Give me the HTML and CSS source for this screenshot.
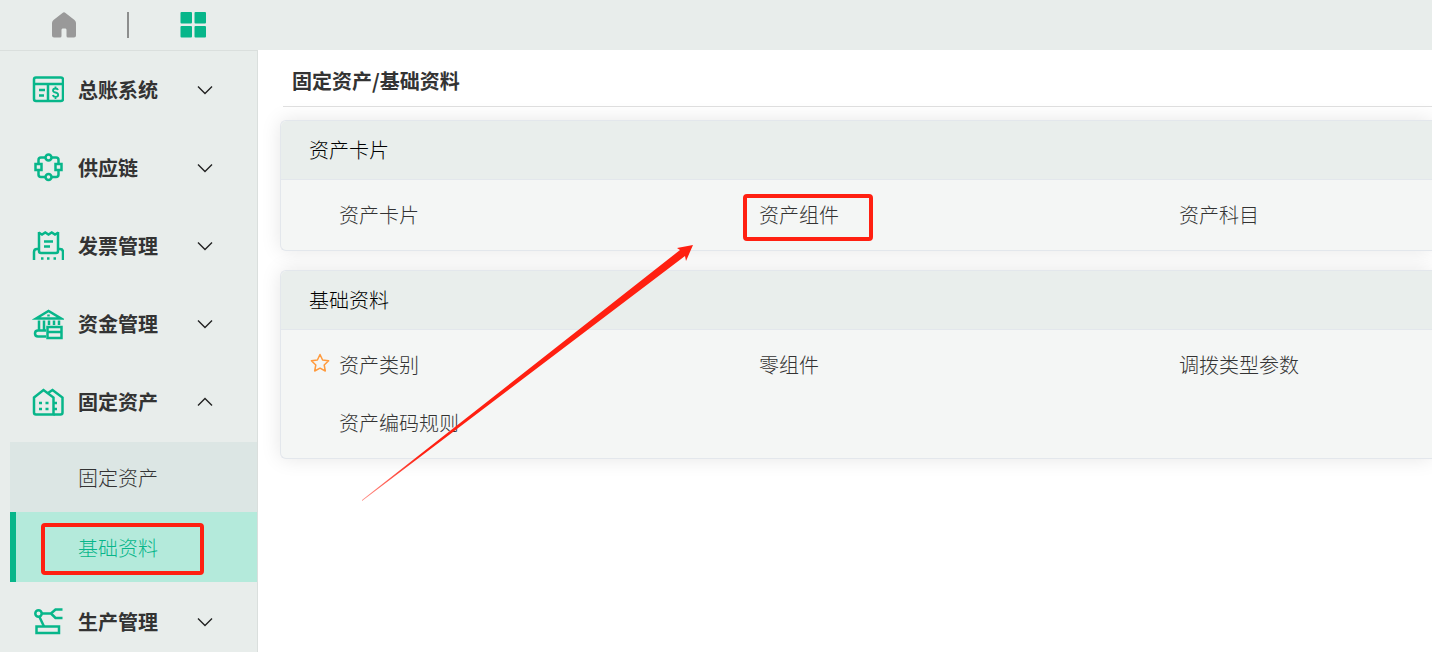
FILE: index.html
```html
<!DOCTYPE html>
<html lang="zh-CN">

<head>
    <meta charset="UTF-8">
    <meta name="viewport" content="width=device-width, initial-scale=1.0">
    <title>固定资产/基础资料</title>
    <link rel="stylesheet" href="styles.css">
</head>

<body>
    <header class="topbar">
        <a href="#" class="top-link" aria-label="首页">
            <svg width="24" height="26" viewBox="0 0 24 26">
                <path d="M10.500 1 Q12 -0.500 13.500 1 L22.500 8 Q24 9.500 24 11 V23.500 Q24 25.500 22 25.500 H16 Q14.500 25.500 14.500 24 V18 Q14.500 16.500 13.500 16.500 H10.500 Q9.500 16.500 9.500 18 V24 Q9.500 25.500 8 25.500 H2 Q0 25.500 0 23.500 V11 Q0 9.500 1.500 8 Z" fill="#999" />
            </svg>
        </a>
        <span class="split"></span>
        <a href="#" class="top-link" aria-label="菜单">
            <svg width="26" height="26" viewBox="0 0 26 26" fill="#07b68a">
                <rect x="0.500" y="0" width="11.500" height="11.500" rx="1" />
                <rect x="14.500" y="0" width="11.500" height="11.500" rx="1" />
                <rect x="0.500" y="14" width="11.500" height="11.500" rx="1" />
                <rect x="14.500" y="14" width="11.500" height="11.500" rx="1" />
            </svg>
        </a>
    </header>

    <div class="page">
        <nav class="sidebar">
            <button type="button" class="menu-item">
                <svg class="icon" viewBox="0 0 32 32">
                    <rect x="2" y="3.500" width="29" height="23.500" rx="2" />
                    <path d="M2 10 H31 M16 10 V27 M7 16 H13 M7 21.500 H12" />
                    <path class="thin" d="M26 16 Q25.500 14.500 23.500 14.500 Q21 14.500 21 16.500 Q21 18 23.500 18.500 Q26.200 19 26.200 21 Q26.200 22.800 23.500 22.800 Q21.200 22.800 20.800 21 M23.500 12.500 V14.500 M23.500 22.500 V25" />
                </svg>
                <span class="menu-text">总账系统</span>
                <svg class="arrow" viewBox="0 0 16 10"><path d="M1 1.500 L8 8.500 L15 1.500" /></svg>
            </button>
            <button type="button" class="menu-item">
                <svg class="icon" viewBox="0 0 32 32">
                    <path d="M13 5.500 H9 Q6.500 5.500 6.500 8 V12 M20 5.500 H24 Q26.500 5.500 26.500 8 V12 M6.500 18.500 V22.500 Q6.500 25 9 25 H13 M26.500 18.500 V22.500 Q26.500 25 24 25 H20" />
                    <circle cx="16.500" cy="5.500" r="3" />
                    <circle cx="16.500" cy="25" r="3" />
                    <rect x="3.500" y="12" width="6" height="6" />
                    <rect x="23.500" y="12" width="6" height="6" />
                </svg>
                <span class="menu-text">供应链</span>
                <svg class="arrow" viewBox="0 0 16 10"><path d="M1 1.500 L8 8.500 L15 1.500" /></svg>
            </button>
            <button type="button" class="menu-item">
                <svg class="icon" viewBox="0 0 32 32">
                    <path d="M7 2 V21 Q7 23 9 23 H24 Q26 23 26 21 V2" />
                    <path d="M6.500 2.500 L10 4.500 L13.250 2.500 L16.500 4.500 L19.750 2.500 L23 4.500 L26.500 2.500" />
                    <path d="M12 11.500 H21 M12 16.500 H18" />
                    <path d="M7 19 H5 Q2 19 2 22 V30 M26 19 H28 Q31 19 31 22 V30" />
                    <path d="M9 28.500 H11.500 M15 28.500 H17.500 M21.500 28.500 H24" />
                </svg>
                <span class="menu-text">发票管理</span>
                <svg class="arrow" viewBox="0 0 16 10"><path d="M1 1.500 L8 8.500 L15 1.500" /></svg>
            </button>
            <button type="button" class="menu-item">
                <svg class="icon" viewBox="0 0 32 32">
                    <path d="M4 10.500 L16.500 3 L29 10.500 Z" />
                    <path d="M16.500 6.500 V8.500 M7 12.500 V22 M12 12.500 V22 M17 12.500 V17 M22 12.500 V17 M27 12.500 V17" />
                    <path d="M14 22.500 H6 Q3 22.500 3 25.500 Q3 28.500 6 28.500 H14" />
                    <rect x="15.500" y="19" width="14" height="11" />
                    <path d="M15.500 24 H29.500" />
                </svg>
                <span class="menu-text">资金管理</span>
                <svg class="arrow" viewBox="0 0 16 10"><path d="M1 1.500 L8 8.500 L15 1.500" /></svg>
            </button>
            <button type="button" class="menu-item">
                <svg class="icon" viewBox="0 0 32 32">
                    <path d="M2 11.500 L11.500 4 L21.500 11.500 V28.500 H4 Q2 28.500 2 26.500 Z" />
                    <path d="M16 7 L20.500 4 L30.500 11.500 V26.500 Q30.500 28.500 28.500 28.500 H21.500" />
                    <path d="M7 17 H10 M13.500 17 H16.500 M7 23 H10 M13.500 23 H16.500 M21.500 17 H25 M21.500 23 H25" />
                </svg>
                <span class="menu-text">固定资产</span>
                <svg class="arrow" viewBox="0 0 16 10"><path d="M1 8.500 L8 1.500 L15 8.500" /></svg>
            </button>
            <div class="submenu">
                <a href="#" class="sub-item">固定资产</a>
                <a href="#" class="sub-item active">基础资料<span class="mark mark-menu"></span></a>
            </div>
            <button type="button" class="menu-item">
                <svg class="icon" viewBox="0 0 32 32">
                    <circle cx="6.500" cy="7.500" r="3.200" />
                    <path d="M10 7.500 H19 L23.500 3.500 H30.500 M19 7.500 L23.500 12 H30.500 M7.500 11 L12 20.500" />
                    <rect x="4.500" y="20.500" width="22.500" height="6.500" />
                </svg>
                <span class="menu-text">生产管理</span>
                <svg class="arrow" viewBox="0 0 16 10"><path d="M1 1.500 L8 8.500 L15 1.500" /></svg>
            </button>
        </nav>

        <main class="content">
            <h1 class="title">固定资产/基础资料</h1>

            <section class="card">
                <h2 class="card-title">资产卡片</h2>
                <div class="card-body">
                    <a href="#" class="entry">资产卡片</a>
                    <a href="#" class="entry">资产组件<span class="mark mark-entry"></span></a>
                    <a href="#" class="entry">资产科目</a>
                </div>
            </section>

            <section class="card">
                <h2 class="card-title">基础资料</h2>
                <div class="card-body">
                    <a href="#" class="entry">
                        <svg class="star" viewBox="0 0 20 20">
                            <path d="M10 1.500 L12.600 7 L18.600 7.800 L14.200 12 L15.300 18 L10 15.200 L4.700 18 L5.800 12 L1.400 7.800 L7.400 7 Z" />
                        </svg>资产类别</a>
                    <a href="#" class="entry">零组件</a>
                    <a href="#" class="entry">调拨类型参数</a>
                    <a href="#" class="entry">资产编码规则</a>
                </div>
            </section>

            <svg class="pointer" viewBox="0 0 332 257">
                <defs>
                    <linearGradient id="fade" gradientUnits="userSpaceOnUse" x1="0" y1="256" x2="60" y2="210">
                        <stop offset="0" stop-color="#ff2011" stop-opacity="0.500" />
                        <stop offset="1" stop-color="#ff2011" />
                    </linearGradient>
                </defs>
                <path d="M0 255 L318 5 L315 3 L331 0 L324 16 L323 11 L0 256 Z" fill="url(#fade)" />
            </svg>
        </main>
    </div>
</body>

</html>
```
FILE: styles.css
```css
* {
    box-sizing: border-box;
}

body {
    margin: 0;
    min-height: 100vh;
    display: flex;
    flex-direction: column;
    overflow: hidden;
    font-family: "Noto Sans CJK SC", sans-serif;
    font-size: 20px;
    line-height: 30px;
    color: #333;
    background-color: #fff;
}

a {
    color: inherit;
    text-decoration: none;
}

.topbar {
    display: flex;
    align-items: center;
    height: 50px;
    padding-left: 52px;
    gap: 51px;
    background-color: #e8edeb;
}

.top-link {
    display: flex;
}

.split {
    width: 2px;
    height: 26px;
    background-color: #8c8e8d;
}

.page {
    flex: 1;
    display: flex;
}

.sidebar {
    flex: none;
    width: 258px;
    border-top: 1px solid #dadfdd;
    border-right: 1px solid #dadfdd;
    background-color: #e8edeb;
}

.menu-item {
    display: flex;
    align-items: center;
    width: 100%;
    height: 78px;
    padding: 0 44px 0 32px;
    border: none;
    background: none;
    font: inherit;
    font-weight: bold;
    color: #333;
    text-align: left;
    cursor: pointer;
}

.icon {
    width: 32px;
    height: 32px;
    margin-right: 14px;
    fill: none;
    stroke: #07b68a;
    stroke-width: 2.5;
}

.icon .thin {
    stroke-width: 1.8;
}

.menu-text {
    flex: 1;
}

.arrow {
    width: 16px;
    height: 10px;
    fill: none;
    stroke: #222;
    stroke-width: 1.4;
}

.submenu {
    margin: 1px 0 1px 10px;
    background-color: #dce6e4;
}

.sub-item {
    display: flex;
    align-items: center;
    position: relative;
    height: 70px;
    padding: 2px 0 0 68px;
    font-weight: 300;
}

.sub-item.active {
    padding-left: 62px;
    border-left: 6px solid #07b68a;
    background-color: #b4eadb;
    color: #07b68a;
}

.content {
    flex: 1;
    min-width: 0;
    position: relative;
    padding-left: 22px;
}

.title {
    margin: 0 0 13px 3px;
    padding: 16px 9px 10px;
    border-bottom: 1px solid #e0e0e0;
    font-size: 20px;
    font-weight: bold;
}

.card {
    margin-bottom: 19px;
    border: 1px solid #e3e7ec;
    border-right: none;
    border-radius: 6px 0 0 6px;
    background-color: #f4f6f5;
    box-shadow: 0 0 20px rgba(0, 0, 0, 0.1);
}

.card-title {
    margin: 0;
    padding: 14px 28px;
    border-bottom: 1px solid #e3e7ec;
    border-radius: 6px 0 0 0;
    background-color: #e9eeec;
    font-size: 20px;
    font-weight: 300;
    color: #000;
}

.card-body {
    display: grid;
    grid-template-columns: 3fr 3fr 2fr;
    padding: 6px 3px 6px 28px;
}

.entry {
    position: relative;
    padding: 14px 0 14px 30px;
    font-weight: 300;
}

.star {
    position: absolute;
    left: 1px;
    top: 17px;
    width: 20px;
    height: 20px;
    fill: none;
    stroke: #ff9a3c;
    stroke-width: 1.5;
    stroke-linejoin: round;
}

/* red highlight boxes and arrow */
.mark {
    position: absolute;
    border: 4px solid #ff2011;
    border-radius: 4px;
}

.mark-menu {
    left: 25px;
    top: 11px;
    width: 163px;
    height: 52px;
}

.mark-entry {
    left: 14px;
    top: 8px;
    width: 130px;
    height: 47px;
}

.pointer {
    position: absolute;
    left: 104px;
    top: 195px;
    width: 332px;
    height: 257px;
    pointer-events: none;
}
```
